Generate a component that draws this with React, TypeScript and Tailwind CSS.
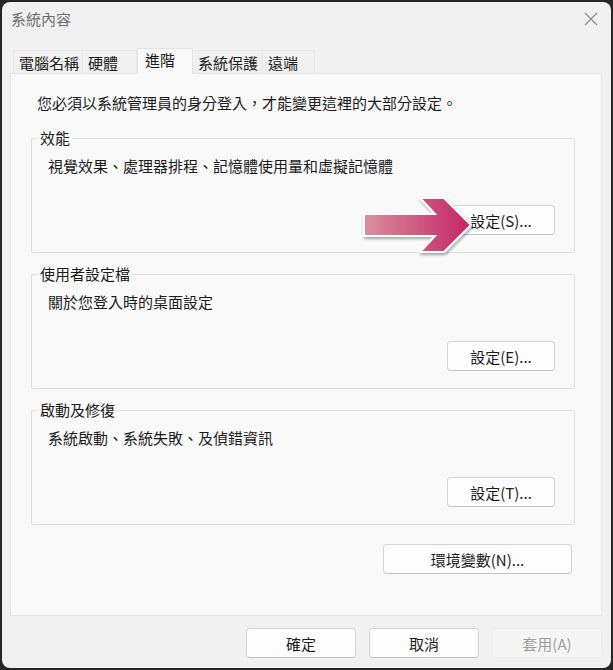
const font = { fontFamily: '"Noto Sans CJK TC", "Noto Sans", sans-serif' };

function Btn({ label, w, disabled }: { label: string; w: string; disabled?: boolean }) {
  return (
    <button
      className={
        disabled
          ? `${w} h-[30px] rounded-[4px] border border-[#ececec] bg-[#f5f5f5] text-[15px] leading-none text-[#9e9e9e]`
          : `${w} h-[30px] rounded-[4px] border border-[#d3d3d3] border-b-[#c2c2c2] bg-[#fdfdfd] text-[15px] leading-none text-[#1b1b1b]`
      }
    >
      {label}
    </button>
  );
}

function Group({ title, desc, btn, arrow }: { title: string; desc: string; btn: string; arrow?: boolean }) {
  return (
    <fieldset className="relative ml-[20px] mr-[26px] border border-[#dedede] rounded-[2px] pb-[17px]">
      <legend className="ml-[6px] px-[2px] text-[15px] leading-[20px] text-[#1b1b1b]">{title}</legend>
      <div className="pl-[16px] pt-[8px] text-[15px] leading-[20px] text-[#1b1b1b]">{desc}</div>
      <div className="flex justify-end pr-[19px] mt-[29px]">
        <Btn label={btn} w="w-[108px]" />
      </div>
      {arrow && (
        <svg className="absolute left-[326px] top-[46px]" width="120" height="64" viewBox="0 0 120 64">
          <defs>
            <linearGradient id="ag" x1="0" y1="0" x2="1" y2="0">
              <stop offset="0" stopColor="#d9909e" />
              <stop offset="0.45" stopColor="#cf5f83" />
              <stop offset="1" stopColor="#c5246a" />
            </linearGradient>
            <filter id="sh" x="-20%" y="-20%" width="140%" height="150%">
              <feDropShadow dx="1" dy="2" stdDeviation="1.6" floodColor="#000" floodOpacity="0.35" />
            </filter>
          </defs>
          <polygon
            points="6,20 77,20 62,4 86,4 113,31 86,58 62,58 77,42 6,42"
            fill="url(#ag)"
            stroke="#ffffff"
            strokeWidth="2"
            strokeLinejoin="miter"
            filter="url(#sh)"
          />
        </svg>
      )}
    </fieldset>
  );
}

function Tab({ label, w, active }: { label: string; w: string; active?: boolean }) {
  return active ? (
    <div
      className={`${w} h-[26px] -mb-px relative z-10 border border-b-0 border-[#e3e3e3] bg-[#f9f9f9] pl-[7px] text-[15px] leading-[22px] text-[#1b1b1b]`}
    >
      {label}
    </div>
  ) : (
    <div
      className={`${w} h-[23px] border border-b-0 border-l-0 first:border-l border-[#e6e6e6] bg-[#f0f0f0] pl-[5px] text-[15px] leading-[24px] text-[#1b1b1b]`}
    >
      {label}
    </div>
  );
}

export default function App() {
  return (
    <div className="w-[613px] h-[670px] bg-[#262626] p-[2px]" style={font}>
      <div className="h-full w-full rounded-[8px] bg-[#f0f0f0] flex flex-col overflow-hidden">
        <div className="h-[33px] flex items-center justify-between pl-[9px] pr-[12px] pt-[1px]">
          <span className="text-[15px] text-[#6f6f6f]">系統內容</span>
          <svg width="14" height="14" viewBox="0 0 14 14" className="mr-[1px]">
            <path d="M1 1 L13 13 M13 1 L1 13" stroke="#8a8a8a" strokeWidth="1.1" />
          </svg>
        </div>
        <div className="flex items-end pl-[11px] mt-[13px] h-[25px]">
          <Tab label="電腦名稱" w="w-[70px]" />
          <Tab label="硬體" w="w-[54px]" />
          <Tab label="進階" w="w-[56px]" active />
          <Tab label="系統保護" w="w-[70px]" />
          <Tab label="遠端" w="w-[52px]" />
        </div>
        <div className="ml-[8px] mr-[9px] h-[543px] border border-[#e3e3e3] bg-[#f9f9f9] flex flex-col">
          <div className="pl-[26px] pt-[19px] text-[15px] leading-[20px] text-[#1b1b1b]">
            您必須以系統管理員的身分登入，才能變更這裡的大部分設定。
          </div>
          <div className="mt-[15px] flex flex-col gap-[11px]">
            <Group title="效能" desc="視覺效果、處理器排程、記憶體使用量和虛擬記憶體" btn="設定(S)..." arrow />
            <Group title="使用者設定檔" desc="關於您登入時的桌面設定" btn="設定(E)..." />
            <Group title="啟動及修復" desc="系統啟動、系統失敗、及偵錯資訊" btn="設定(T)..." />
          </div>
          <div className="flex justify-end mr-[29px] mt-[19px]">
            <Btn label="環境變數(N)..." w="w-[189px]" />
          </div>
        </div>
        <div className="flex justify-end gap-[13px] mr-[9px] mt-[12px]">
          <Btn label="確定" w="w-[110px]" />
          <Btn label="取消" w="w-[110px]" />
          <Btn label="套用(A)" w="w-[110px]" disabled />
        </div>
      </div>
    </div>
  );
}
